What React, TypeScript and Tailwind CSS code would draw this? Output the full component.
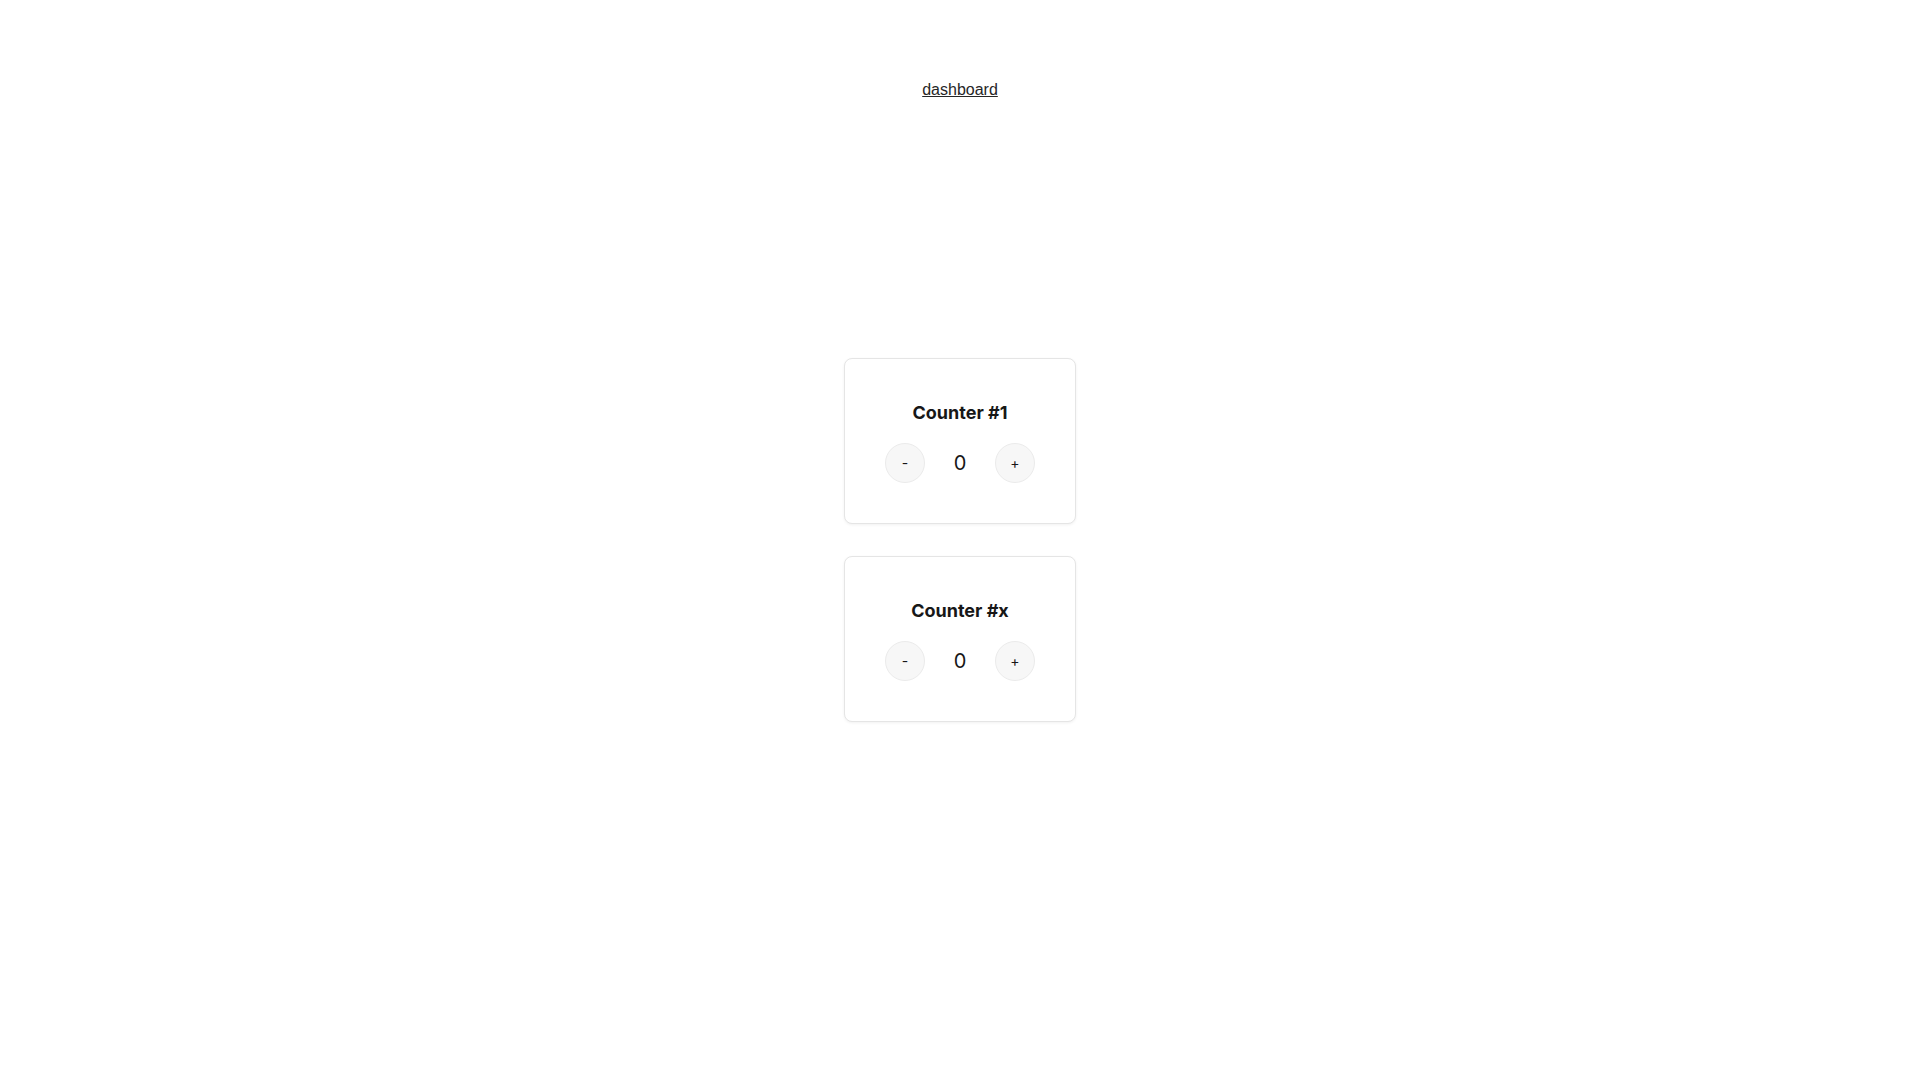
import { useState } from "react"

function Counter({ label }: { label: string }) {
  const [count, setCount] = useState(0)

  return (
    <div className="w-[232px] rounded-lg border border-[#e5e5e5] bg-white p-10 shadow-[0_1px_3px_rgba(0,0,0,0.06)]">
      <h2 className="text-center text-[18px] leading-7 font-bold text-[#171717]">{label}</h2>
      <div className="mt-4 flex items-center justify-between">
        <button
          onClick={() => setCount(count - 1)}
          className="flex h-10 w-10 items-center justify-center rounded-full border border-[#ebebeb] bg-[#f7f7f7] text-sm text-[#171717]"
        >
          -
        </button>
        <span className="text-[20px] text-[#171717]">{count}</span>
        <button
          onClick={() => setCount(count + 1)}
          className="flex h-10 w-10 items-center justify-center rounded-full border border-[#ebebeb] bg-[#f7f7f7] text-sm text-[#171717]"
        >
          +
        </button>
      </div>
    </div>
  )
}

export default function App() {
  return (
    <div className="flex min-h-screen flex-col bg-white font-['Inter',sans-serif]">
      <header className="flex h-[120px] justify-center pt-[78px]">
        <a href="#" className="font-['Liberation_Sans',Arial,sans-serif] text-base text-[#262626] underline">
          dashboard
        </a>
      </header>
      <main className="flex flex-1 flex-col items-center justify-center gap-8 pb-[120px]">
        <Counter label="Counter #1" />
        <Counter label="Counter #x" />
      </main>
    </div>
  )
}
